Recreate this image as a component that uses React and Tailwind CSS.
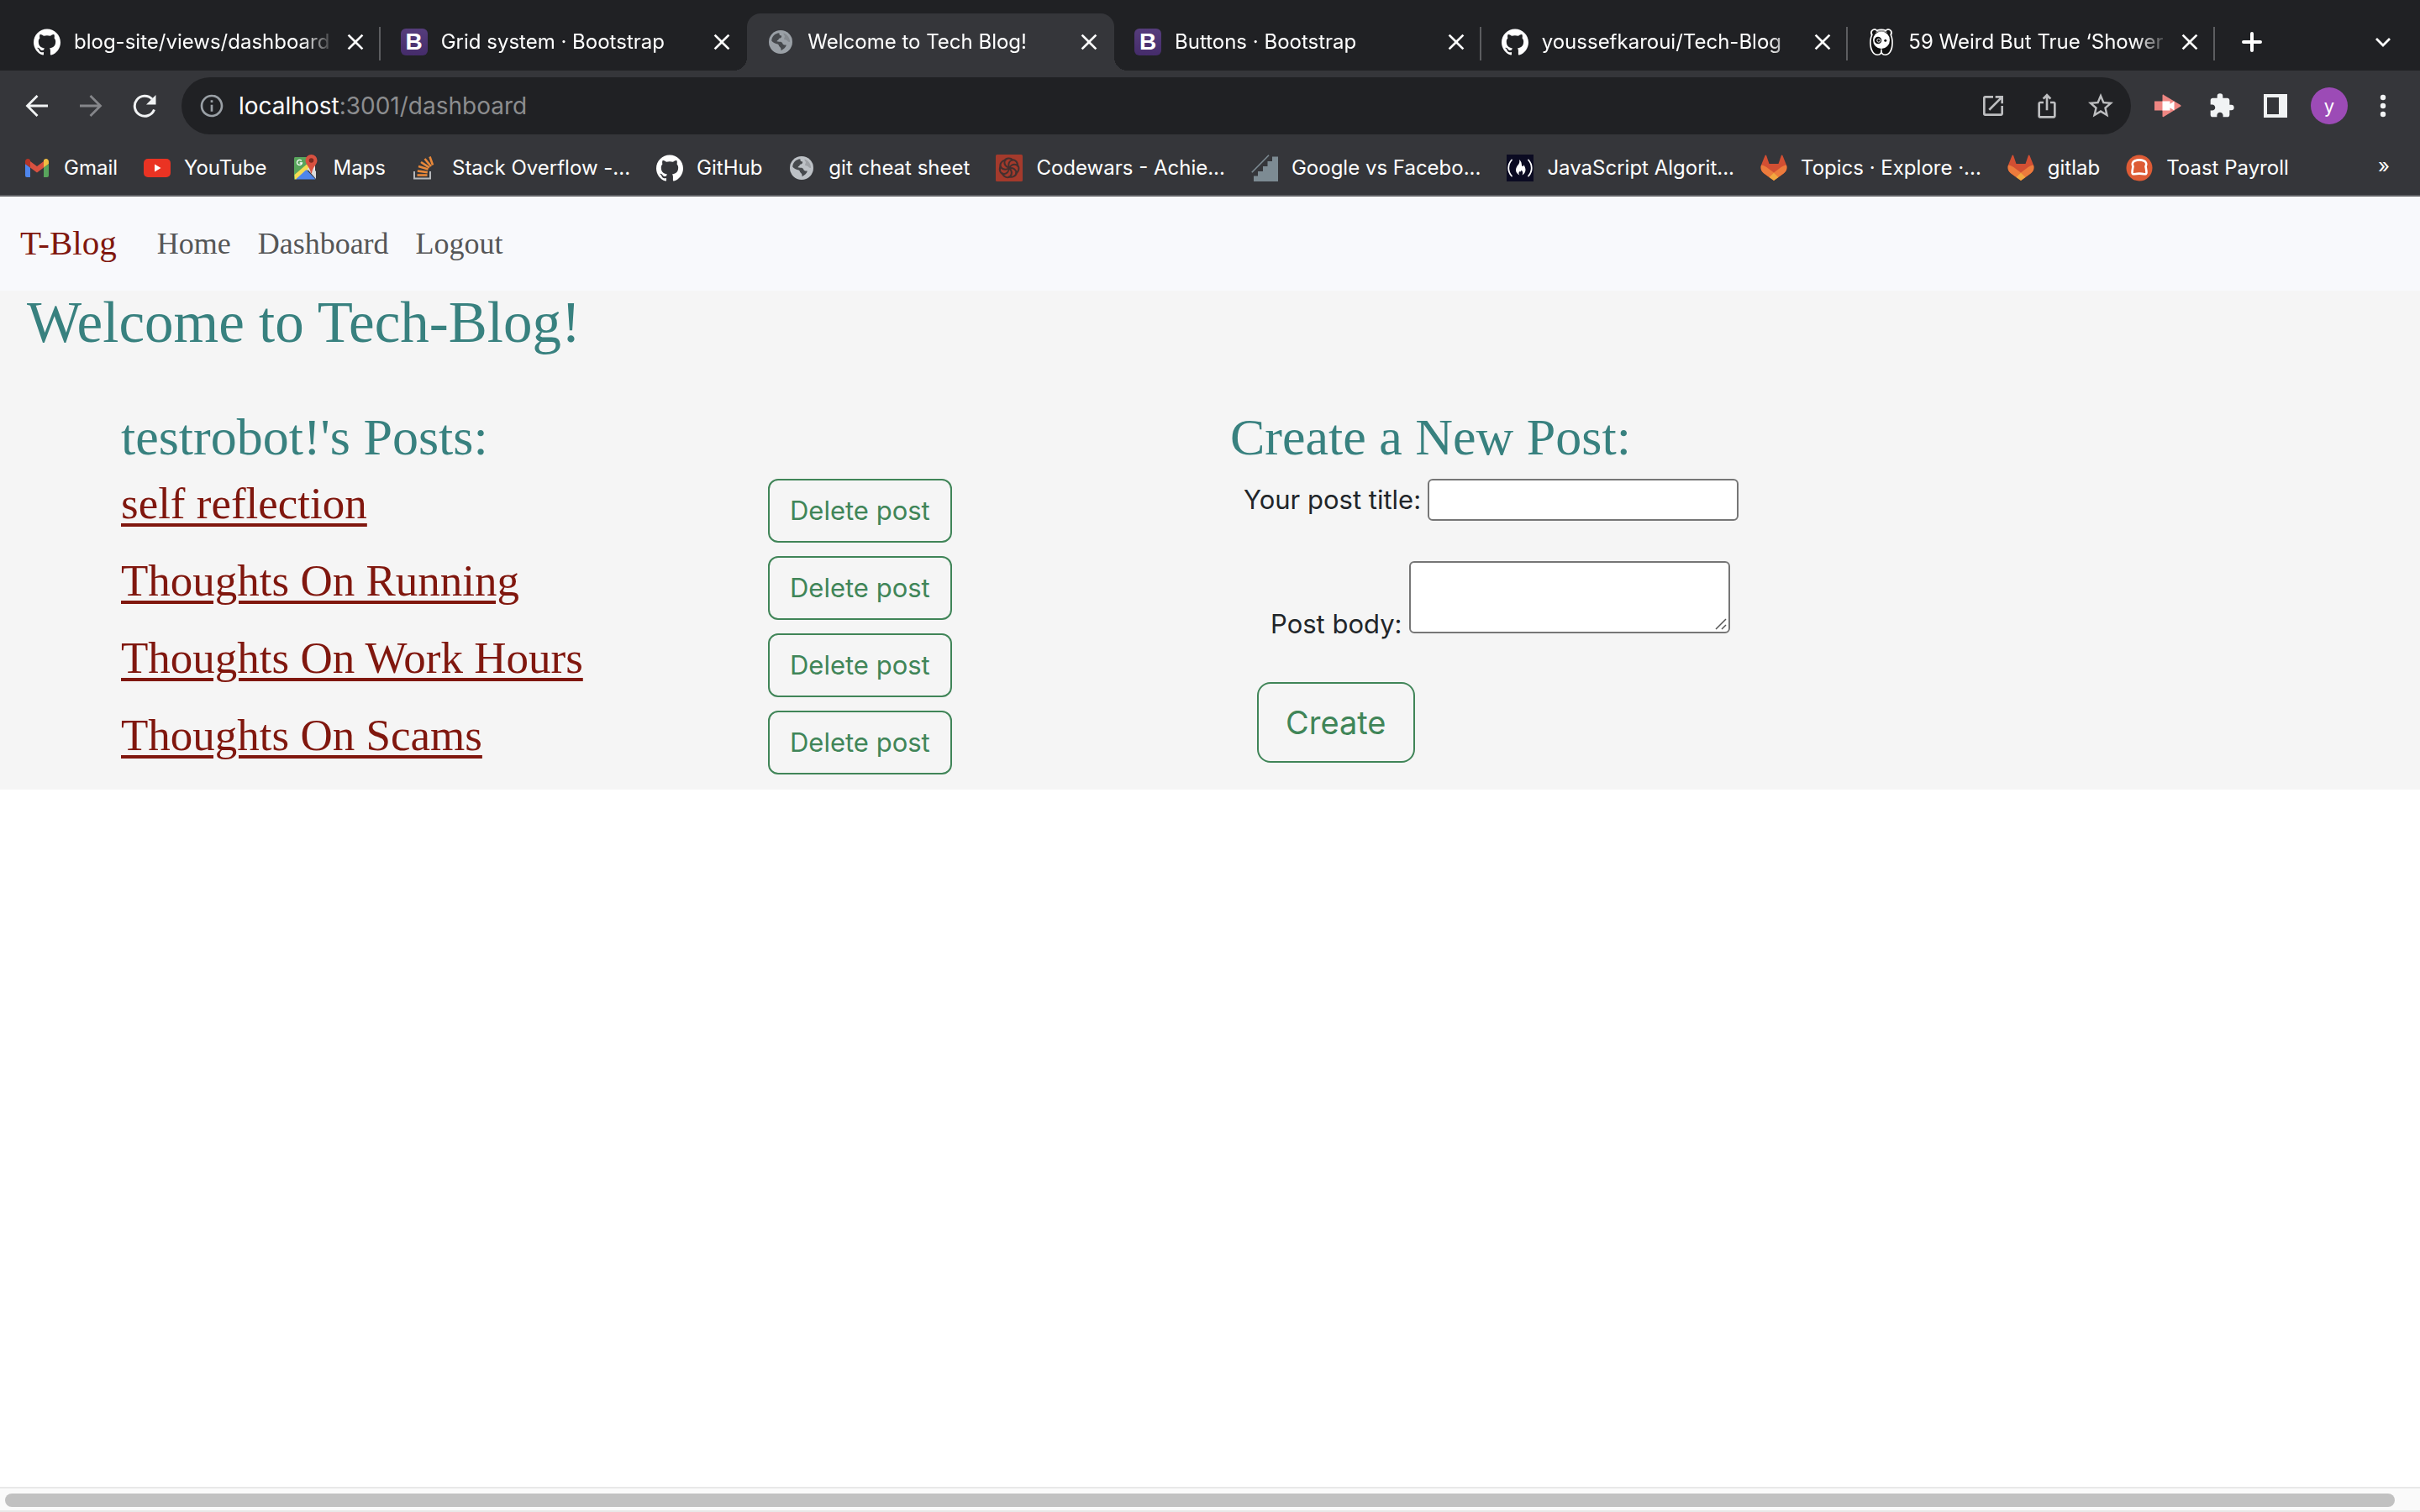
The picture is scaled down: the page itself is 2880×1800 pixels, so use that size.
import React from "react";
import { SiGithub } from "react-icons/si";
import {
  MdClose,
  MdExtension,
  MdOutlineInfo,
  MdOpenInNew,
  MdIosShare,
  MdStarOutline,
} from "react-icons/md";

const serif = "font-['Liberation_Serif',serif]";

function Globe({ className, land }) {
  return (
    <svg viewBox="0 0 28 28" className={className} aria-hidden="true">
      <circle cx="14" cy="14" r="14" fill="currentColor" />
      <path
        d="M12.5 3.2c-.6 2 .6 3 2.6 3.2.3 2.2-1 3-3 3.4-.4 2-2.2 2-2.6 3.4 1.6.8 4.4-.2 6 1.200 1.200 1.200 1 2.800 2.800 3 1 .2 1.500-.2 2.400.2-.2 2.600-3 5.200-6.200 6.600.2-2.200-.2-3.600-1.800-4.800-1-1-.8-2.400-2.200-3-2.600-.4-5-1.400-7.200-3.600C3.100 7.600 7.200 3.600 12.500 3.200z"
        fill={land}
      />
      <path d="M17.500 3.500c4.600 1.500 7.600 5.700 7.600 10.300-1.400.3-2.500-.3-3.200-1.600-1.500-.5-3-.2-3.800-1.600 0-1.600 1.200-2.400.8-3.800-.4-1-1.600-1.600-1.400-3.300z" fill={land} opacity="0.25" />
    </svg>
  );
}

function BootstrapIcon() {
  return (
    <span className="flex h-8 w-8 items-center justify-center rounded-md bg-linear-to-b from-[#563d7c] to-[#452c6b] font-['Liberation_Sans',sans-serif] text-[28px] leading-none font-bold text-white">
      B
    </span>
  );
}

function PandaIcon() {
  return (
    <svg viewBox="0 0 32 32" className="h-8 w-8" aria-hidden="true">
      <path
        d="M6.500.5c1.800-.5 3.300 0 4.200 1 3.200-1.200 7.400-1.200 10.600 0 .9-1 2.400-1.500 4.200-1 3.300 1 4.300 4.500 2.700 7.200 1.700 3.600 2 8.500 1.400 13C29 26.500 26 32 20.500 32c-2 0-3.500-.8-4.500-2-1 1.200-2.500 2-4.500 2C6 32 3 26.500 2.400 20.700c-.6-4.500-.3-9.400 1.400-13C2.200 5 3.200 1.500 6.500.5z"
        fill="#fff"
      />
      <path
        d="M7 2c1.500-.3 2.500.2 3.500 1.200 3.400-1.200 7.600-1.200 11 0C22.500 2.200 23.500 1.700 25 2c2.200.8 2.600 3 1.300 5.200 2 4 2.300 8.800 1.700 13.300-.7 5-3.200 10-7.500 10-2.300 0-3.700-1.200-3.700-3.500v-2.500h-1.600V27c0 2.300-1.400 3.500-3.700 3.500-4.300 0-6.800-5-7.500-10-.6-4.500-.3-9.300 1.700-13.300C4.400 5 4.800 2.800 7 2z"
        fill="#111"
      />
      <ellipse cx="16" cy="13.800" rx="10" ry="10.200" fill="#fff" />
      <path d="M9.500 4.300c4-1.800 9-1.800 13 0" stroke="#fff" strokeWidth="0.800" fill="none" />
      <circle cx="12" cy="14" r="4.300" fill="#111" />
      <circle cx="12.800" cy="14.200" r="2" fill="none" stroke="#fff" strokeWidth="0.900" />
      <circle cx="20.800" cy="14.200" r="1.500" fill="#111" />
    </svg>
  );
}

function GmailIcon() {
  return (
    <svg viewBox="0 0 32 32" className="h-8 w-8" aria-hidden="true">
      <path d="M2 11l6 4.500V27H4a2 2 0 0 1-2-2z" fill="#4f86ec" />
      <path d="M30 11l-6 4.500V27h4a2 2 0 0 0 2-2z" fill="#58a55c" />
      <path d="M8 8l8 6 8-6v7.500L16 21.500 8 15.500z" fill="#d85140" />
      <path d="M2 8.500C2 5.500 5 4 7.500 6L8 6.400v9.100L2 11z" fill="#b43427" />
      <path d="M30 8.500C30 5.500 27 4 24.500 6l-.5.400v9.100L30 11z" fill="#f1bd42" />
    </svg>
  );
}

function YouTubeIcon() {
  return (
    <svg viewBox="0 0 32 32" className="h-8 w-8" aria-hidden="true">
      <rect x="0" y="5" width="32" height="22" rx="5" fill="#ea3323" />
      <path d="M13 11.500v9l7.500-4.500z" fill="#fff" />
    </svg>
  );
}

function MapsIcon() {
  return (
    <svg viewBox="0 0 32 32" className="h-8 w-8" aria-hidden="true">
      <path d="M3 3h18l3 13L10 23l-8 7V5a2 2 0 0 1 1-2z" fill="#58a55c" />
      <path d="M18 15l9 9V12z" fill="#e8e8e8" />
      <path d="M2.500 24L20 9l4 5L4.500 29.500H3z" fill="#f5dc53" />
      <path d="M4 29.500l12.500-11.500L27.500 29.500z" fill="#4f86ec" />
      <path d="M17.500 17l4.500-3 6 6v9z" fill="#dcdcdc" />
      <path d="M22.500 0a7 7 0 0 1 7 7c0 5-5 7-6.500 15-.2.800-.8.800-1 0-1.500-8-6.500-10-6.500-15a7 7 0 0 1 7-7z" fill="#d85140" />
      <circle cx="22.500" cy="7" r="2.800" fill="#7c2a20" />
      <path d="M10.800 7.500A3 3 0 1 0 11.400 10H8.700" fill="none" stroke="#fff" strokeWidth="1.300" />
    </svg>
  );
}

function StackOverflowIcon() {
  return (
    <svg viewBox="0 0 32 32" className="h-8 w-8" aria-hidden="true">
      <path d="M3 20v8.500h19V20" fill="none" stroke="#b5b7ba" strokeWidth="2" />
      <g stroke="#e8883a" strokeWidth="2.600">
        <path d="M6.500 24.500h12" />
        <path d="M6.800 19.500l12 1.600" />
        <path d="M8 14l11.500 3.500" />
        <path d="M11 9l10 6.500" />
        <path d="M15.500 5l7.500 9" />
        <path d="M21.500 2.500l3.500 10" />
      </g>
    </svg>
  );
}

function CodewarsIcon() {
  return (
    <svg viewBox="0 0 32 32" className="h-8 w-8" aria-hidden="true">
      <rect width="32" height="32" rx="1.500" fill="#a43a2c" />
      <g fill="none" stroke="#43302f" strokeWidth="2">
        {[0, 51, 103, 154, 206, 257, 309].map((a) => (
          <path key={a} d="M16 16c-1.500-4-.5-7.500 3-9.500M9.800 8c2.500-4.500 8.500-4.500 11-.5" transform={`rotate(${a} 16 16)`} />
        ))}
      </g>
    </svg>
  );
}

function StairsIcon() {
  return (
    <svg viewBox="0 0 32 32" className="h-8 w-8" aria-hidden="true">
      <path d="M3 32v-6.500h5v-5.500h6v-6h5.500V8H25V2.500h7V32z" fill="#7d8b93" />
      <path d="M.8 21.200L21 .8" stroke="#7d8b93" strokeWidth="1.600" />
    </svg>
  );
}

function FreeCodeCampIcon() {
  return (
    <svg viewBox="0 0 32 32" className="h-8 w-8" aria-hidden="true">
      <rect width="32" height="32" fill="#0b0b22" />
      <g fill="none" stroke="#fff" strokeWidth="1.800" strokeLinecap="round">
        <path d="M6 6.500c-5 5.500-5 13.500 0 19" />
        <path d="M26 6.500c5 5.500 5 13.500 0 19" />
      </g>
      <path d="M15 6c4 3 2 7 4 8 1 .3 1.200-.8 1-2 4 5 3 10-1.500 12.500 1.500-3 .5-4.500-1-6-.3 2-1 2.200-2 1.500-1.500 1.500-1.500 3 .2 4.500-5-2-6-6.500-3-11C14.500 11.500 16 9.500 15 6z" fill="#fff" />
    </svg>
  );
}

function GitlabIcon() {
  return (
    <svg viewBox="0 0 32 32" className="h-8 w-8" aria-hidden="true">
      <path d="M5.600 1c.3-.8 1.200-.8 1.500 0l3.400 10h11L24.900 1c.3-.8 1.200-.8 1.500 0L31 12.500c1.200 4 0 7.500-3 9.700L16 31 4 22.200C1 20-.2 16.500 1 12.500z" fill="#d24f33" />
      <path d="M1 12.500c3.500.5 6 2 8 3.700l7 5.300-5.500 5.400L4 22.200C1 20-.2 16.500 1 12.500zM31 12.500c-3.500.5-6 2-8 3.700l-7 5.300 5.500 5.400 6.500-4.700c3-2.200 4.200-5.700 3-9.700z" fill="#ec7b3c" />
      <path d="M16 21.500l5.600 5.400L16 31l-5.600-4.100z" fill="#f2a83f" />
    </svg>
  );
}

function ToastIcon() {
  return (
    <svg viewBox="0 0 32 32" className="h-8 w-8" aria-hidden="true">
      <circle cx="16" cy="16" r="15.500" fill="#dd5b35" />
      <path
        d="M10.500 7.500c3.500-1.500 7.500-1.500 11 0 2.500 1 3.500 4 2 6.500.2 2 1 4.500 1 7.500 0 1.500-1 2-2.500 1.700-4-.7-8-.7-12 0C8.500 23.500 7.500 23 7.500 21.500c0-3 .8-5.500 1-7.500C7 11.500 8 8.500 10.500 7.500z"
        fill="none"
        stroke="#fff"
        strokeWidth="2.600"
      />
    </svg>
  );
}

function MeetExtensionIcon() {
  return (
    <svg viewBox="0 0 32 32" className="h-8 w-8" aria-hidden="true">
      <path d="M0 10.500h9.500V3.500c0-.8.800-1.200 1.500-.6L31 15c.8.500.8 1.300 0 1.800L11 29c-.7.500-1.500.2-1.500-.6v-6.800H0z" fill="#ee8682" />
      <path d="M9.500 10.500h9v3.200l5-3.200v11l-5-3.200v3.300h-9z" fill="#fff" />
    </svg>
  );
}

const tabs = [
  { title: "blog-site/views/dashboard", icon: <SiGithub className="h-8 w-8 text-white" />, line: true },
  { title: "Grid system · Bootstrap", icon: <BootstrapIcon /> },
  { title: "Welcome to Tech Blog!", icon: <Globe className="mx-0.5 h-7 w-7 text-[#9aa0a6]" land="#46494d" />, active: true },
  { title: "Buttons · Bootstrap", icon: <BootstrapIcon />, line: true },
  { title: "youssefkaroui/Tech-Blog", icon: <SiGithub className="h-8 w-8 text-white" />, line: true },
  { title: "59 Weird But True ‘Shower", icon: <PandaIcon />, line: true },
];

const bookmarks = [
  ["Gmail", <GmailIcon />],
  ["YouTube", <YouTubeIcon />],
  ["Maps", <MapsIcon />],
  ["Stack Overflow -...", <StackOverflowIcon />],
  ["GitHub", <SiGithub className="h-8 w-8 text-white" />],
  ["git cheat sheet", <Globe className="mx-0.5 h-7 w-7 text-[#bdc1c6]" land="#46494d" />],
  ["Codewars - Achie...", <CodewarsIcon />],
  ["Google vs Facebo...", <StairsIcon />],
  ["JavaScript Algorit...", <FreeCodeCampIcon />],
  ["Topics · Explore ·...", <GitlabIcon />],
  ["gitlab", <GitlabIcon />],
  ["Toast Payroll", <ToastIcon />],
];

function Tab({ tab }) {
  return (
    <div
      className={
        tab.active
          ? "relative flex min-w-0 flex-1 items-center rounded-t-2xl bg-[#35363a] pr-3.5 pl-6"
          : "relative flex min-w-0 flex-1 items-center pr-3.5 pl-6"
      }
    >
      {tab.active && (
        <>
          <span className="absolute bottom-0 -left-4 h-4 w-4 bg-[radial-gradient(circle_at_0_0,transparent_16px,#35363a_16px)]" />
          <span className="absolute -right-4 bottom-0 h-4 w-4 bg-[radial-gradient(circle_at_100%_0,transparent_16px,#35363a_16px)]" />
        </>
      )}
      <span className="flex w-8 shrink-0 justify-center">{tab.icon}</span>
      <span className="ml-4 flex-1 overflow-hidden text-2xl whitespace-nowrap text-white [mask-image:linear-gradient(to_right,black_calc(100%-40px),transparent)]">
        {tab.title}
      </span>
      <button type="button" aria-label={`Close ${tab.title}`} className="ml-2 text-white">
        <MdClose className="h-8 w-8" />
      </button>
      {tab.line && <span className="absolute top-4 right-0 h-10 w-0.5 bg-[#5c5d60]" />}
    </div>
  );
}

function ToolButton({ label, children, tone = "text-[#f1f3f4]" }) {
  return (
    <button type="button" aria-label={label} className={`flex w-16 shrink-0 items-center justify-center ${tone}`}>
      {children}
    </button>
  );
}

function Arrow({ flip }) {
  return (
    <svg viewBox="0 0 28 28" className={flip ? "h-7 w-7 rotate-180" : "h-7 w-7"} fill="none" stroke="currentColor" strokeWidth="2.800" aria-hidden="true">
      <path d="M27 14H3M14.500 2L2.500 14l12 12" />
    </svg>
  );
}

function Browser() {
  return (
    <header className="bg-[#35363a] font-[Inter,sans-serif]">
      <div className="flex bg-[#202124] pt-4 pl-4">
        <div className="flex h-[68px] w-[2620px]">
          {tabs.map((tab) => (
            <Tab key={tab.title} tab={tab} />
          ))}
        </div>
        <button type="button" aria-label="New tab" className="flex w-[88px] items-center justify-center text-white">
          <svg viewBox="0 0 24 24" className="h-6 w-6" stroke="currentColor" strokeWidth="4" strokeLinecap="round" aria-hidden="true">
            <path d="M12 2v20M2 12h20" />
          </svg>
        </button>
        <button type="button" aria-label="Search tabs" className="mr-3 ml-auto flex w-16 items-center justify-center text-white">
          <svg viewBox="0 0 20 12" className="h-3 w-5" fill="none" stroke="currentColor" strokeWidth="2.800" aria-hidden="true">
            <path d="M2 2l8 8 8-8" />
          </svg>
        </button>
      </div>

      <div className="flex h-[84px] items-stretch px-3 pt-2 pb-2">
        <ToolButton label="Back"><Arrow /></ToolButton>
        <ToolButton label="Forward" tone="text-[#85868a]"><Arrow flip /></ToolButton>
        <ToolButton label="Reload">
          <svg viewBox="0 0 28 28" className="h-7 w-7" aria-hidden="true">
            <path d="M25.500 18.500A12 12 0 1 1 23 6" fill="none" stroke="currentColor" strokeWidth="3" />
            <path d="M27.500 1v11.500H16z" fill="currentColor" />
          </svg>
        </ToolButton>
        <div className="mx-3 flex min-w-0 flex-1 items-center rounded-full bg-[#202124] pr-1 pl-5">
          <MdOutlineInfo className="h-8 w-8 shrink-0 text-[#9aa0a6]" />
          <span className="ml-4 flex-1 text-[28px] text-[#8c8d8f]">
            <span className="text-white">localhost</span>:3001/dashboard
          </span>
          <ToolButton label="Open in new window" tone="text-[#bdbec0]"><MdOpenInNew className="h-8 w-8" /></ToolButton>
          <ToolButton label="Share" tone="text-[#bdbec0]"><MdIosShare className="h-8 w-8" /></ToolButton>
          <ToolButton label="Bookmark this page" tone="text-[#bdbec0]"><MdStarOutline className="h-9 w-9" /></ToolButton>
        </div>
        <ToolButton label="Meeting extension"><MeetExtensionIcon /></ToolButton>
        <ToolButton label="Extensions"><MdExtension className="h-8 w-8" /></ToolButton>
        <ToolButton label="Side panel">
          <svg viewBox="0 0 28 28" className="h-7 w-7" fill="currentColor" aria-hidden="true">
            <path fillRule="evenodd" d="M0 0h28v28H0zM4 4v20h14V4z" />
          </svg>
        </ToolButton>
        <ToolButton label="Profile">
          <span className="flex h-11 w-11 items-center justify-center rounded-full bg-[#9c4bb6] text-[22px] leading-none text-white">y</span>
        </ToolButton>
        <ToolButton label="Menu">
          <svg viewBox="0 0 8 28" className="h-7 w-2" fill="currentColor" aria-hidden="true">
            <circle cx="4" cy="4" r="3.200" />
            <circle cx="4" cy="14" r="3.200" />
            <circle cx="4" cy="24" r="3.200" />
          </svg>
        </ToolButton>
      </div>

      <nav aria-label="Bookmarks" className="flex h-[66px] items-start border-b-2 border-[#5f6064] pr-9 pl-7">
        <ul className="flex h-16 items-center gap-[31px]">
          {bookmarks.map(([name, icon]) => (
            <li key={name}>
              <a href="#bookmark" className="flex items-center gap-4 text-2xl whitespace-nowrap text-white">
                {icon}
                {name}
              </a>
            </li>
          ))}
        </ul>
        <button type="button" aria-label="More bookmarks" className="ml-auto h-15 text-2xl text-white">»</button>
      </nav>
    </header>
  );
}

const posts = ["self reflection", "Thoughts On Running", "Thoughts On Work Hours", "Thoughts On Scams"];

export default function App() {
  return (
    <div className="flex min-h-screen flex-col bg-white">
      <Browser />

      <nav aria-label="Site" className={`flex h-28 items-center bg-[#f8f9fc] pl-6 text-4xl text-[#555657] ${serif}`}>
        <a href="#home" className="mr-12 text-[41px] text-[#80170e]">T-Blog</a>
        <div className="flex gap-8">
          <a href="#home">Home</a>
          <a href="#dashboard">Dashboard</a>
          <a href="#logout">Logout</a>
        </div>
      </nav>

      <main className="bg-[#f5f5f5] pb-0.5">
        <h1 className={`pl-8 text-[69px] leading-[76px] text-[#38817f] ${serif}`}>Welcome to Tech-Blog!</h1>

        <div className="mt-16 grid grid-cols-2 px-[120px]">
          <section className="pl-6">
            <h2 className={`mb-4 text-[62px] leading-[68px] text-[#38817f] ${serif}`}>testrobot!'s Posts:</h2>
            <ul>
              {posts.map((post) => (
                <li key={post} className="-ml-6 mb-4 grid grid-cols-12 items-start">
                  <a href="#post" className={`col-span-7 ml-6 justify-self-start text-[53px] leading-[58px] text-[#80170e] underline decoration-4 underline-offset-[6px] ${serif}`}>
                    {post}
                  </a>
                  <button type="button" className="col-span-5 ml-6 h-19 justify-self-start rounded-xl border-2 border-[#408558] px-6 font-[Inter,sans-serif] text-[31px] text-[#408558]">
                    Delete post
                  </button>
                </li>
              ))}
            </ul>
          </section>

          <section className="pl-6">
            <h2 className={`mb-4 text-[62px] leading-[68px] text-[#38817f] ${serif}`}>Create a New Post:</h2>
            <form className="font-[Inter,sans-serif] text-[31px] text-[#212529]" onSubmit={(e) => e.preventDefault()}>
              <div className="flex items-center pl-4">
                <label htmlFor="post-title">Your post title:</label>
                <input id="post-title" type="text" className="ml-2 h-[50px] w-[370px] rounded-md border-2 border-[#767676] bg-white px-1" />
              </div>
              <div className="mt-12 flex items-end pl-12">
                <label htmlFor="post-body" className="-mb-3">Post body:</label>
                <div className="relative ml-2 flex">
                  <textarea id="post-body" className="h-[86px] w-[382px] resize-none rounded-md border-2 border-[#767676] bg-white p-1" />
                  <svg viewBox="0 0 14 14" className="absolute right-1 bottom-1 h-3.5 w-3.5" stroke="#555" strokeWidth="1.500" aria-hidden="true">
                    <path d="M1 13L13 1M8 13l5-5" />
                  </svg>
                </div>
              </div>
              <button type="submit" className="mt-[58px] ml-8 h-24 rounded-2xl border-2 border-[#408558] px-8 text-[38px] text-[#408558]">
                Create
              </button>
            </form>
          </section>
        </div>
      </main>

      <div className="mt-auto border-y-2 border-[#e8e8e8] bg-[#fafafa] pt-1.5 pr-[30px] pb-1 pl-1.5">
        <div className="h-4 rounded-full bg-[#c1c1c1]" />
      </div>
    </div>
  );
}
